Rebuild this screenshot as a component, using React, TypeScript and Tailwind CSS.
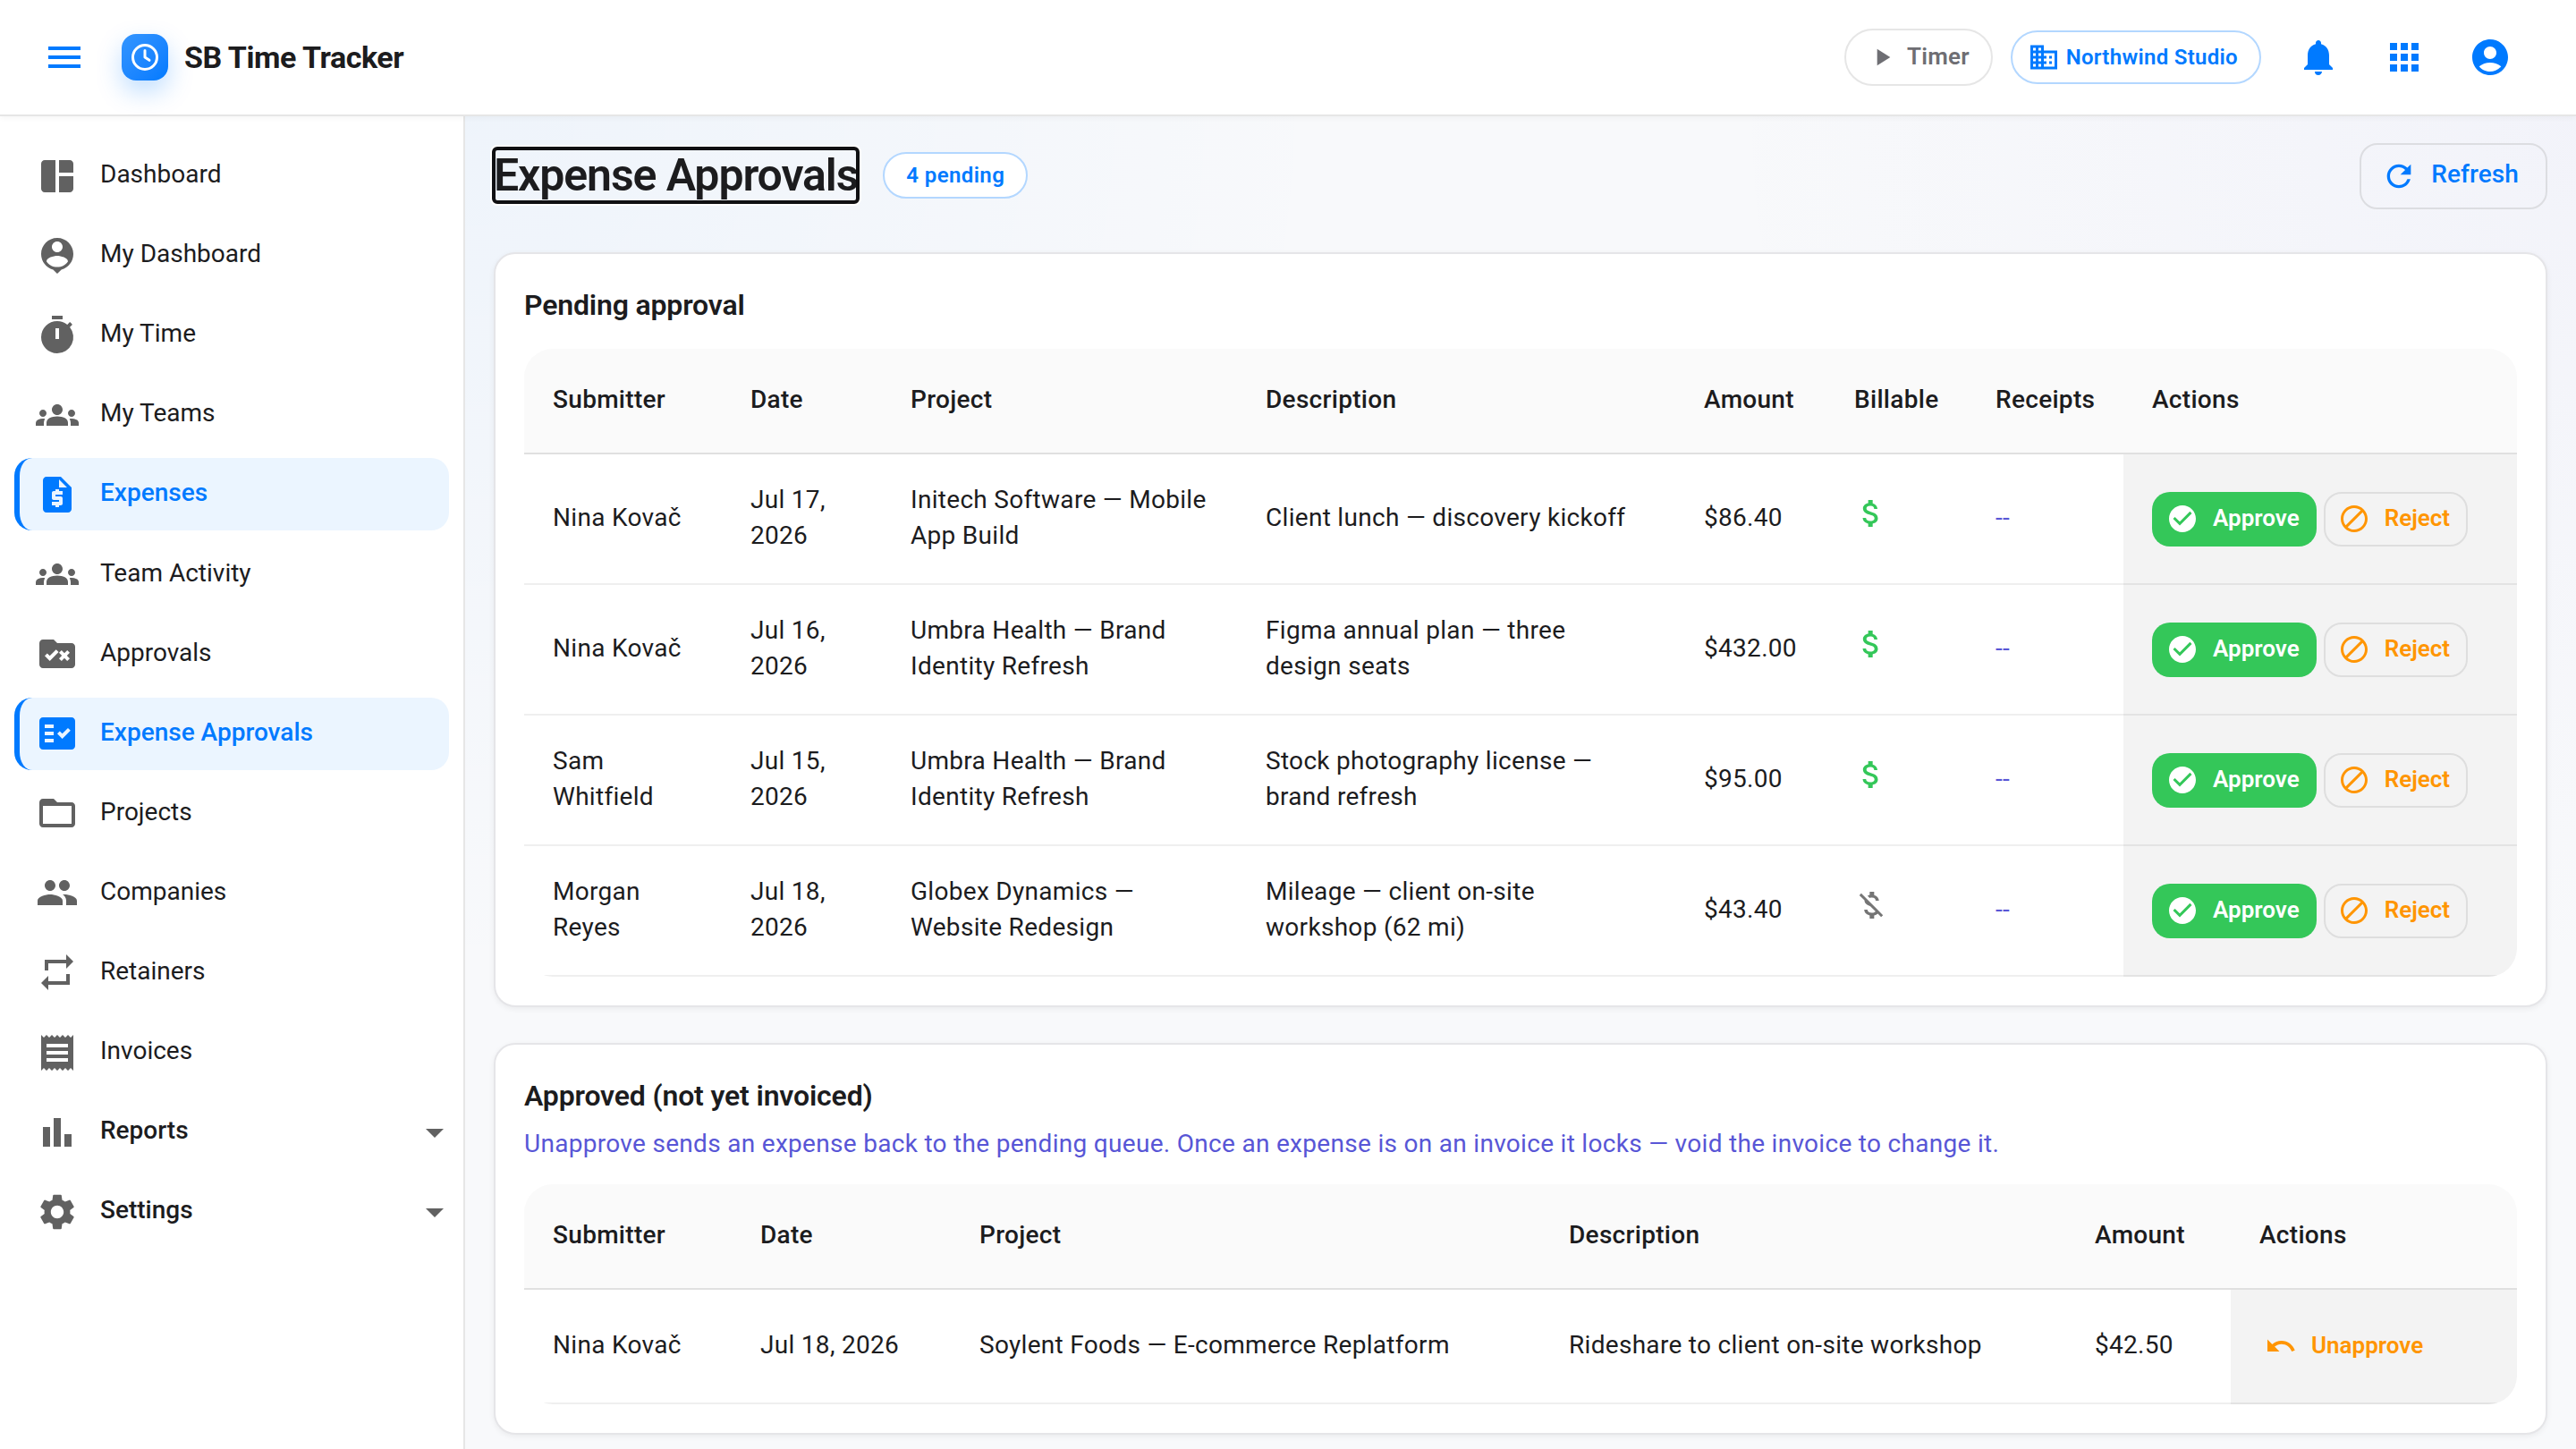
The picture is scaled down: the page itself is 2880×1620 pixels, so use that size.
import type { ReactNode } from "react";
import type { IconType } from "react-icons";
import { clsx } from "clsx";
import {
  MdAccountCircle,
  MdApps,
  MdArrowDropDown,
  MdAttachMoney,
  MdCheckCircle,
  MdDomain,
  MdDoNotDisturbAlt,
  MdFactCheck,
  MdFolderOpen,
  MdGroups,
  MdMenu,
  MdMoneyOff,
  MdNotifications,
  MdPeople,
  MdPlayArrow,
  MdReceipt,
  MdRefresh,
  MdRepeat,
  MdRequestQuote,
  MdRuleFolder,
  MdSettings,
  MdSpaceDashboard,
  MdTimer,
  MdUndo,
} from "react-icons/md";

type IconProps = { className?: string };

function PersonPinIcon({ className }: IconProps) {
  return (
    <svg viewBox="0 0 24 24" fill="currentColor" className={className}>
      <path d="M12 2c-4.97 0-9 4.03-9 9 0 4.17 2.84 7.67 6.69 8.69L12 22l2.31-2.31C18.16 18.67 21 15.17 21 11c0-4.97-4.03-9-9-9zm0 2c1.66 0 3 1.34 3 3s-1.34 3-3 3-3-1.34-3-3 1.34-3 3-3zm0 14.3c-2.5 0-4.71-1.28-6-3.22.03-1.99 4-3.08 6-3.08 1.99 0 5.97 1.09 6 3.08-1.29 1.94-3.5 3.22-6 3.22z" />
    </svg>
  );
}

function BarsIcon({ className }: IconProps) {
  return (
    <svg viewBox="0 0 24 24" fill="currentColor" className={className}>
      <path d="M4 9h4v11H4zM16 13h4v7h-4zM10 4h4v16h-4z" />
    </svg>
  );
}

interface NavItem {
  label: string;
  icon: IconType | ((props: IconProps) => ReactNode);
  active?: boolean;
  group?: boolean;
}

const navItems: NavItem[] = [
  { label: "Dashboard", icon: MdSpaceDashboard },
  { label: "My Dashboard", icon: PersonPinIcon },
  { label: "My Time", icon: MdTimer },
  { label: "My Teams", icon: MdGroups },
  { label: "Expenses", icon: MdRequestQuote, active: true },
  { label: "Team Activity", icon: MdGroups },
  { label: "Approvals", icon: MdRuleFolder },
  { label: "Expense Approvals", icon: MdFactCheck, active: true },
  { label: "Projects", icon: MdFolderOpen },
  { label: "Companies", icon: MdPeople },
  { label: "Retainers", icon: MdRepeat },
  { label: "Invoices", icon: MdReceipt },
  { label: "Reports", icon: BarsIcon, group: true },
  { label: "Settings", icon: MdSettings, group: true },
];

interface Expense {
  submitter: string;
  date: string;
  project: string;
  description: string;
  amount: string;
  billable: boolean;
}

const pendingExpenses: Expense[] = [
  {
    submitter: "Nina Kovač",
    date: "Jul 17, 2026",
    project: "Initech Software — Mobile App Build",
    description: "Client lunch — discovery kickoff",
    amount: "$86.40",
    billable: true,
  },
  {
    submitter: "Nina Kovač",
    date: "Jul 16, 2026",
    project: "Umbra Health — Brand Identity Refresh",
    description: "Figma annual plan — three design seats",
    amount: "$432.00",
    billable: true,
  },
  {
    submitter: "Sam Whitfield",
    date: "Jul 15, 2026",
    project: "Umbra Health — Brand Identity Refresh",
    description: "Stock photography license — brand refresh",
    amount: "$95.00",
    billable: true,
  },
  {
    submitter: "Morgan Reyes",
    date: "Jul 18, 2026",
    project: "Globex Dynamics — Website Redesign",
    description: "Mileage — client on-site workshop (62 mi)",
    amount: "$43.40",
    billable: false,
  },
];

const approvedExpenses: Expense[] = [
  {
    submitter: "Nina Kovač",
    date: "Jul 18, 2026",
    project: "Soylent Foods — E-commerce Replatform",
    description: "Rideshare to client on-site workshop",
    amount: "$42.50",
    billable: true,
  },
];

function AppBar() {
  return (
    <header className="relative z-10 flex h-[130px] shrink-0 items-center border-b-2 border-[#e6e6e6] bg-white px-12 shadow-[0_2px_6px_rgba(0,0,0,0.04)]">
      <MdMenu className="size-12 text-[#007aff]" />
      <div className="ml-10 flex size-[52px] items-center justify-center rounded-[16px] bg-linear-to-br from-[#3395ff] to-[#007aff] shadow-[0_12px_28px_rgba(0,122,255,0.25)]">
        <svg
          viewBox="0 0 24 24"
          fill="none"
          stroke="white"
          strokeWidth="2"
          strokeLinecap="round"
          strokeLinejoin="round"
          className="size-9"
        >
          <circle cx="12" cy="12" r="9" />
          <path d="M12 7v5l3.3 2.2" />
        </svg>
      </div>
      <span className="ml-[18px] text-[34px] leading-none font-bold tracking-[-0.45px]">
        SB Time Tracker
      </span>

      <div className="ml-auto flex items-center">
        <button className="flex h-16 items-center gap-3 rounded-full border-2 border-[#e6e6e6] px-6 text-[26px] font-semibold tracking-[0.2px] text-[#6e6e73]">
          <MdPlayArrow className="size-8" />
          <span className="pb-0.5">Timer</span>
        </button>
        <button className="ml-5 flex h-[60px] items-center gap-[7px] rounded-full border-2 border-[#b3d7ff] pr-6 pl-[17px] text-[24px] font-semibold tracking-[0.3px] text-[#007aff]">
          <MdDomain className="size-9" />
          Northwind Studio
        </button>
        <div className="ml-4 flex text-[#007aff]">
          <button className="p-6">
            <MdNotifications className="size-12" />
          </button>
          <button className="p-6">
            <MdApps className="size-12" />
          </button>
          <button className="p-6">
            <MdAccountCircle className="size-12" />
          </button>
        </div>
      </div>
    </header>
  );
}

function Sidebar() {
  return (
    <nav className="flex w-[520px] shrink-0 flex-col gap-2 border-r-2 border-[#e6e6e6] bg-white px-4 pt-[26px] tracking-normal">
      {navItems.map(({ label, icon: Icon, active, group }) => (
        <a
          key={label}
          className={clsx(
            "flex h-[81.1px] shrink-0 items-center rounded-[20px]",
            active
              ? "border-l-[6px] border-[#007aff] bg-[#ebf5ff] pl-[18px] font-medium text-[#007aff]"
              : "pl-6",
            group && "font-medium"
          )}
        >
          <Icon className={clsx("size-12 shrink-0", !active && "text-[#616161]")} />
          <span className="ml-6 grow pb-[3px]">{label}</span>
          {group && <MdArrowDropDown className="-mr-2 size-12 text-[#616161]" />}
        </a>
      ))}
    </nav>
  );
}

function Card({ children }: { children: ReactNode }) {
  return (
    <section className="rounded-[24px] border-2 border-[#e5e5e8] bg-white px-8 pb-8 shadow-[0_2px_6px_rgba(0,0,0,0.06)]">
      {children}
    </section>
  );
}

function ExpenseTable({
  columns,
  children,
}: {
  columns: { label: string; width: string }[];
  children: ReactNode;
}) {
  return (
    <div className="overflow-hidden rounded-[32px]">
      <table className="w-full table-fixed border-separate border-spacing-0">
        <thead>
          <tr>
            {columns.map(({ label, width }) => (
              <th
                key={label}
                className={clsx(
                  "h-[118px] border-b-2 border-[#e0e0e0] bg-[#fafafa] px-8 pb-0.5 text-left font-medium",
                  width
                )}
              >
                {label}
              </th>
            ))}
          </tr>
        </thead>
        <tbody>{children}</tbody>
      </table>
    </div>
  );
}

function Cell({ children, actions }: { children: ReactNode; actions?: boolean }) {
  return (
    <td
      className={clsx(
        "border-b-2 pl-8 align-middle",
        actions ? "border-[#e3e3e3] bg-[#f3f3f3] pr-4" : "border-[#efefef] pr-8 pb-0.5"
      )}
    >
      {children}
    </td>
  );
}

const buttonBase =
  "flex h-[61px] items-center gap-4 rounded-[20px] text-[26px] font-semibold tracking-normal";

export default function App() {
  return (
    <div className="flex h-[1620px] w-[2880px] flex-col overflow-hidden bg-[#f8f9fb] font-['Roboto',sans-serif] text-[28px] leading-[40px] tracking-[0.3px] text-[#1c1c1e]">
      <AppBar />
      <div className="flex min-h-0 grow">
        <Sidebar />
        <main className="flex grow flex-col bg-[radial-gradient(circle_at_0%_0%,rgba(0,122,255,0.04),transparent_35%),radial-gradient(circle_at_100%_0%,rgba(88,86,214,0.035),transparent_35%)] px-8 pt-[30px]">
          <div className="flex h-[74px] justify-between">
            <div className="flex items-center pb-0.5">
              <h1 className="h-[60px] rounded-[4px] text-[50px] leading-[60px] font-semibold tracking-[-1.1px] whitespace-nowrap shadow-[0_0_0_4px_#fff] outline-4 outline-offset-[-2px] outline-[#101012]">
                Expense Approvals
              </h1>
              <span className="ml-7 flex h-[52px] items-center rounded-full border-2 border-[#b3d7ff] bg-white px-6 text-[24px] font-semibold tracking-[0.4px] text-[#007aff]">
                4 pending
              </span>
            </div>
            <button className="flex items-center gap-4 rounded-[20px] border-2 border-[#dcdde1] pr-[30px] pl-[22px] font-medium tracking-[0.1px] text-[#007aff]">
              <MdRefresh className="size-10" />
              <span className="pb-1">Refresh</span>
            </button>
          </div>

          <div className="mt-12 flex flex-col gap-10">
            {/* Queue waiting for a decision */}
            <Card>
              <h2 className="pt-[33px] pb-[25px] text-[32px] leading-[48px] font-semibold tracking-[-0.16px]">
                Pending approval
              </h2>
              <ExpenseTable
                columns={[
                  { label: "Submitter", width: "w-[221px]" },
                  { label: "Date", width: "w-[179px]" },
                  { label: "Project", width: "w-[397px]" },
                  { label: "Description", width: "w-[490px]" },
                  { label: "Amount", width: "w-[168px]" },
                  { label: "Billable", width: "w-[158px]" },
                  { label: "Receipts", width: "w-[175px]" },
                  { label: "Actions", width: "w-[440px]" },
                ]}
              >
                {pendingExpenses.map((expense) => (
                  <tr key={expense.date} className="h-[146px]">
                    <Cell>{expense.submitter}</Cell>
                    <Cell>{expense.date}</Cell>
                    <Cell>{expense.project}</Cell>
                    <Cell>{expense.description}</Cell>
                    <Cell>{expense.amount}</Cell>
                    <Cell>
                      <div className="-ml-px pb-2.5">
                        {expense.billable ? (
                          <MdAttachMoney className="size-10 text-[#34c759]" />
                        ) : (
                          <MdMoneyOff className="size-10 text-[#757575]" />
                        )}
                      </div>
                    </Cell>
                    <Cell>
                      <span className="text-[#5856d6]">--</span>
                    </Cell>
                    <Cell actions>
                      <div className="flex gap-2">
                        <button
                          className={clsx(buttonBase, "bg-[#34c759] pr-[19px] pl-4 text-white")}
                        >
                          <MdCheckCircle className="size-9" />
                          <span className="pb-0.5">Approve</span>
                        </button>
                        <button
                          className={clsx(
                            buttonBase,
                            "border-2 border-[#dedede] pr-[18px] pl-[14px] text-[#ff9500]"
                          )}
                        >
                          <MdDoNotDisturbAlt className="size-9" />
                          <span className="pb-0.5">Reject</span>
                        </button>
                      </div>
                    </Cell>
                  </tr>
                ))}
              </ExpenseTable>
            </Card>

            {/* Approved expenses that can still be pulled back */}
            <Card>
              <h2 className="pt-[33px] text-[32px] leading-[48px] font-semibold tracking-[-0.16px]">
                Approved (not yet invoiced)
              </h2>
              <p className="pt-2.5 pb-[25px] text-[#5856d6]">
                Unapprove sends an expense back to the pending queue. Once an expense is on an
                invoice it locks — void the invoice to change it.
              </p>
              <ExpenseTable
                columns={[
                  { label: "Submitter", width: "w-[232px]" },
                  { label: "Date", width: "w-[245px]" },
                  { label: "Project", width: "w-[659px]" },
                  { label: "Description", width: "w-[588px]" },
                  { label: "Amount", width: "w-[184px]" },
                  { label: "Actions", width: "w-[320px]" },
                ]}
              >
                {approvedExpenses.map((expense) => (
                  <tr key={expense.date} className="h-32">
                    <Cell>{expense.submitter}</Cell>
                    <Cell>{expense.date}</Cell>
                    <Cell>{expense.project}</Cell>
                    <Cell>{expense.description}</Cell>
                    <Cell>{expense.amount}</Cell>
                    <Cell actions>
                      <button className={clsx(buttonBase, "px-1.5 text-[#ff9500]")}>
                        <MdUndo className="size-9" />
                        <span className="pb-[3px]">Unapprove</span>
                      </button>
                    </Cell>
                  </tr>
                ))}
              </ExpenseTable>
            </Card>
          </div>
        </main>
      </div>
    </div>
  );
}
